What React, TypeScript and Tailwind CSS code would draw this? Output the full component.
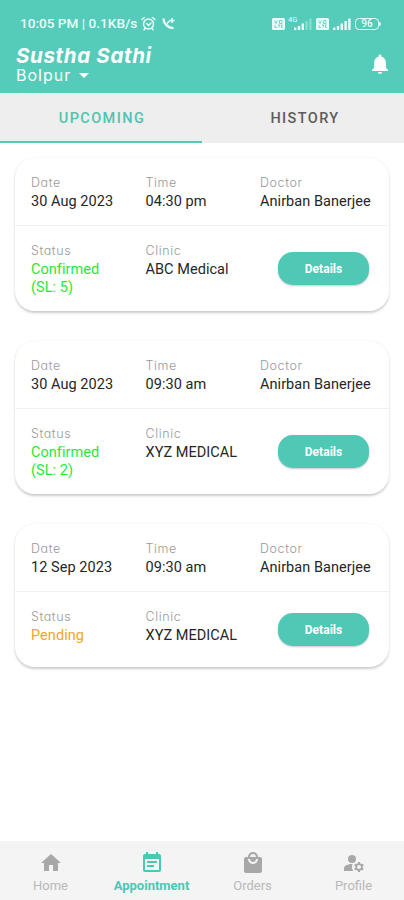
import type { ReactNode } from "react";
import clsx from "clsx";
import { MdEventNote, MdHome, MdLocalMall, MdManageAccounts, MdNotifications } from "react-icons/md";

type Appointment = {
  date: string;
  time: string;
  doctor: string;
  status: string;
  confirmed: boolean;
  clinic: string;
};

const APPOINTMENTS: Appointment[] = [
  { date: "30 Aug 2023", time: "04:30 pm", doctor: "Anirban Banerjee", status: "Confirmed (SL: 5)", confirmed: true, clinic: "ABC Medical" },
  { date: "30 Aug 2023", time: "09:30 am", doctor: "Anirban Banerjee", status: "Confirmed (SL: 2)", confirmed: true, clinic: "XYZ MEDICAL" },
  { date: "12 Sep 2023", time: "09:30 am", doctor: "Anirban Banerjee", status: "Pending", confirmed: false, clinic: "XYZ MEDICAL" },
];

const NAV = [
  { label: "Home", icon: MdHome },
  { label: "Appointment", icon: MdEventNote, active: true },
  { label: "Orders", icon: MdLocalMall },
  { label: "Profile", icon: MdManageAccounts },
];

function AlarmIcon() {
  return (
    <svg width="15" height="15" viewBox="0 0 15 15" className="ml-1" fill="none" stroke="currentColor" strokeWidth="1.5" strokeLinecap="round" aria-hidden>
      <circle cx="7.500" cy="8" r="5" />
      <path d="M1 3.500L3.500 1.500M14 3.500L11.500 1.500M5.500 7.500l2 2L10 7M4 12.500l-1 1.200M11 12.500l1 1.200" />
    </svg>
  );
}

function CallIcon() {
  return (
    <svg width="13" height="13" viewBox="0 0 13 13" className="ml-1.5" fill="none" stroke="currentColor" aria-hidden>
      <path d="M1.5 1.5c0 5 4.5 9.5 10 9.5" strokeWidth="2.2" />
      <path d="M5 6.5l3-3h4.5M10 1v5" strokeWidth="1.5" />
    </svg>
  );
}

function VolteIcon() {
  return (
    <svg width="13" height="12" viewBox="0 0 13 12" aria-hidden>
      <rect width="13" height="12" rx="1.5" fill="#eafffb" />
      <path d="M2.5 2.5l1.5 3 1.5-3M7.5 2.5H10v3H7.5zM3 7v2.5h2M6 7h2.5M7.2 7v2.5M11 7H9.5v2.5H11" fill="none" stroke="#55cbb9" strokeWidth="0.8" />
    </svg>
  );
}

function SignalIcon({ weak = false }: { weak?: boolean }) {
  return (
    <svg width="18" height="12" viewBox="0 0 18 12" fill="#eafffb" aria-hidden>
      <rect x="0" y="9.5" width="2.4" height="2.5" />
      <rect x="3.8" y="8" width="2.4" height="4" />
      <rect x="7.6" y="5.5" width="2.4" height="6.5" />
      <rect x="11.4" y="3" width="2.4" height="9" opacity={weak ? 0.35 : 1} />
      <rect x="15.2" y="0.5" width="2.4" height="11.5" opacity={weak ? 0.35 : 1} />
    </svg>
  );
}

function StatusBar() {
  return (
    <div className="flex h-[46px] items-center pl-5 pr-[23px] pt-px text-[#eafffb]">
      <span className="whitespace-nowrap text-[13.6px] font-medium leading-none">10:05 PM | 0.1KB/s</span>
      <AlarmIcon />
      <CallIcon />
      <div className="ml-auto flex items-center">
        <VolteIcon />
        <div className="relative ml-[9px]">
          <SignalIcon weak />
          <span className="absolute -left-1.5 -top-0.5 text-[7.5px] leading-none">4G</span>
        </div>
        <div className="ml-1 flex items-center gap-1">
          <VolteIcon />
          <SignalIcon />
        </div>
        <span className="ml-1 flex h-3 w-6 items-center justify-center rounded-[4px] border border-[#eafffb] text-[10px] font-medium leading-none">96</span>
        <span className="h-1 w-0.5 rounded-r bg-[#eafffb]" />
      </div>
    </div>
  );
}

function Header() {
  return (
    <header className="h-[93px] bg-[#55cbb9] text-white">
      <StatusBar />
      <div className="flex justify-between pl-4 pr-3">
        <div className="font-[Inter,sans-serif]">
          <h1 className="text-[20.5px] font-bold italic leading-5 tracking-[0.65px] [font-feature-settings:'cv11']">Sustha Sathi</h1>
          <div className="flex items-center text-base leading-[18px] tracking-[1px]">
            Bolpur
            <svg width="10" height="5" viewBox="0 0 10 5" className="ml-2" fill="currentColor" aria-hidden>
              <path d="M0 0h10L5 5z" />
            </svg>
          </div>
        </div>
        <MdNotifications size={24} className="mt-1.5" />
      </div>
    </header>
  );
}

function Field({ label, className, children }: { label: string; className?: string; children: ReactNode }) {
  return (
    <div className={clsx("leading-[18px]", className)}>
      <div className="-mt-px mb-px font-[Inter,sans-serif] text-[12.5px] font-light tracking-[0.6px] text-[#999] [font-feature-settings:'cv11']">{label}</div>
      {children}
    </div>
  );
}

function AppointmentCard({ item }: { item: Appointment }) {
  return (
    <article className="rounded-[20px] bg-white text-[14.5px] tracking-[0.05px] text-[#262626] shadow-[0_1.5px_2.5px_rgba(0,0,0,0.2)]">
      <div className="flex h-[68px] border-b border-[#f0f0f0] pl-4 pt-[17px]">
        <Field label="Date" className="w-[114.5px]">{item.date}</Field>
        <Field label="Time" className="w-[114.5px]">{item.time}</Field>
        <Field label="Doctor" className="whitespace-nowrap">{item.doctor}</Field>
      </div>
      <div className={clsx("flex pl-4 pr-5 pt-[17px]", item.confirmed ? "h-[85px]" : "h-[75px]")}>
        <Field label="Status" className="w-[114.5px]">
          <div className={clsx("w-20", item.confirmed ? "text-[#27e83b]" : "text-[#f5a623]")}>{item.status}</div>
        </Field>
        <Field label="Clinic">{item.clinic}</Field>
        <button className="-mt-[17px] ml-auto h-[33px] w-[91px] self-center rounded-[15px] bg-[#4fc8b6] text-xs font-bold text-white shadow-[0_1px_2px_rgba(0,0,0,0.22)]">
          Details
        </button>
      </div>
    </article>
  );
}

export default function App() {
  return (
    <div className="flex h-[900px] w-[404px] flex-col overflow-hidden bg-white font-[Roboto,sans-serif]">
      <Header />
      <div className="grid h-[50px] grid-cols-2 bg-[#eeeeee] text-[14.5px] font-medium tracking-[1.4px]">
        <button className="border-b-2 border-[#55cbb9] pl-0.5 pt-[3px] text-[#4fc4ae]">UPCOMING</button>
        <button className="border-b-2 border-transparent pl-1 pt-[3px] text-[#5c5c5c]">HISTORY</button>
      </div>
      <main className="flex flex-1 flex-col gap-[30px] px-[15px] pt-[15px]">
        {APPOINTMENTS.map((item, i) => (
          <AppointmentCard key={i} item={item} />
        ))}
      </main>
      <nav className="grid h-[59px] grid-cols-4 bg-[#f4f4f4]">
        {NAV.map(({ label, icon: Icon, active }) => (
          <div key={label} className={clsx("flex flex-col items-center pt-2.5 text-[13px]", active ? "font-bold text-[#4bc8b4]" : "text-[#b8b8b8]")}>
            <Icon size={24} className={active ? undefined : "text-[#a8a8a8]"} />
            <span className="mt-0.5 leading-[18px]">{label}</span>
          </div>
        ))}
      </nav>
    </div>
  );
}
